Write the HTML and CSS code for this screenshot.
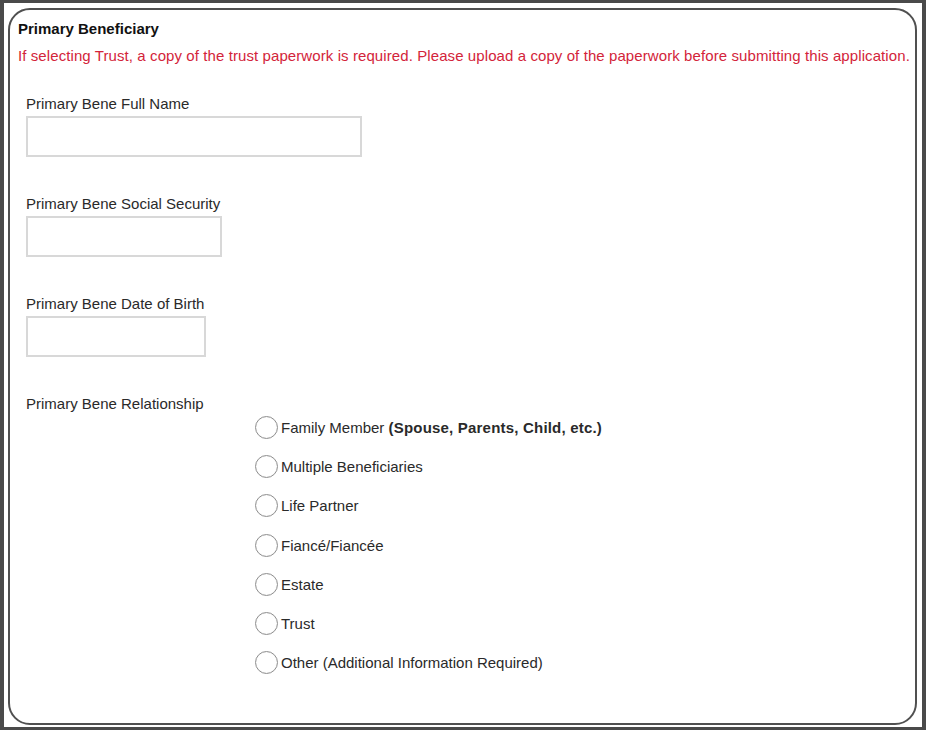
FILE: index.html
```html
<!DOCTYPE html>
<html lang="en">
<head>
    <meta charset="UTF-8">
    <title>Primary Beneficiary</title>
    <link rel="stylesheet" href="styles.css">
</head>
<body>
    <div class="page">
        <div class="panel">
            <h3 class="panel-title">Primary Beneficiary</h3>
            <p class="notice">If selecting Trust, a copy of the trust paperwork is required. Please upload a copy of the paperwork before submitting this application.</p>

            <div class="field">
                <label for="bene-name">Primary Bene Full Name</label>
                <input type="text" id="bene-name" class="input-wide">
            </div>

            <div class="field">
                <label for="bene-ssn">Primary Bene Social Security</label>
                <input type="text" id="bene-ssn" class="input-mid">
            </div>

            <div class="field">
                <label for="bene-dob">Primary Bene Date of Birth</label>
                <input type="text" id="bene-dob" class="input-short">
            </div>

            <div class="field">
                <span class="field-label">Primary Bene Relationship</span>
                <ul class="radio-list">
                    <li><label><input type="radio" name="relationship" value="family"><span>Family Member <b>(Spouse, Parents, Child, etc.)</b></span></label></li>
                    <li><label><input type="radio" name="relationship" value="multiple"><span>Multiple Beneficiaries</span></label></li>
                    <li><label><input type="radio" name="relationship" value="partner"><span>Life Partner</span></label></li>
                    <li><label><input type="radio" name="relationship" value="fiance"><span>Fiancé/Fiancée</span></label></li>
                    <li><label><input type="radio" name="relationship" value="estate"><span>Estate</span></label></li>
                    <li><label><input type="radio" name="relationship" value="trust"><span>Trust</span></label></li>
                    <li><label><input type="radio" name="relationship" value="other"><span>Other (Additional Information Required)</span></label></li>
                </ul>
            </div>
        </div>
    </div>
</body>
</html>
```

FILE: styles.css
```css
body {
    margin: 0;
    padding: 3px 4px 3px 4px;
    background-color: #4a4a4a;
    font-family: "Liberation Sans", Arial, sans-serif;
    font-size: 15px;
    color: #2a2a2a;
}
.page {
    background-color: #fff;
    padding: 5px 5px 2px 4px;
    height: 724px;
    box-sizing: border-box;
}
.panel {
    border: 2px solid #505050;
    border-radius: 22px;
    height: 717px;
    box-sizing: border-box;
    padding: 10px 8px;
}
.panel-title {
    font-size: 15px;
    font-weight: bold;
    margin: 0;
    color: #111;
    line-height: 17px;
}
.notice {
    color: #d3243a;
    font-size: 15px;
    margin: 10px 0 0 0;
    line-height: 17px;
    letter-spacing: 0.09px;
    white-space: nowrap;
}
.field {
    margin: 31px 0 0 8px;
}
.field + .field {
    margin-top: 38px;
}
.field label,
.field-label {
    display: block;
    line-height: 17px;
    margin-bottom: 4px;
}
input[type="text"] {
    display: block;
    height: 41px;
    box-sizing: border-box;
    border: 2px solid #d8d8d8;
    padding: 4px;
    font-size: 15px;
}
.input-wide { width: 336px; }
.input-mid { width: 196px; }
.input-short { width: 180px; }
.radio-list {
    list-style-type: none;
    margin: -8px 0 0 0;
    padding: 0 0 0 229px;
}
.radio-list li {
    height: 39.2px;
    display: flex;
    align-items: center;
}
.radio-list label {
    display: flex;
    align-items: center;
    margin: 0;
}
.radio-list input[type="radio"] {
    appearance: none;
    width: 23px;
    height: 23px;
    margin: 0 3px 0 0;
    border: 1px solid #8f8f8f;
    border-radius: 50%;
    background-color: #fff;
    box-shadow: inset 0 0 1px rgba(0, 0, 0, 0.15);
}
.radio-list b {
    font-weight: bold;
    letter-spacing: 0.2px;
}
```
